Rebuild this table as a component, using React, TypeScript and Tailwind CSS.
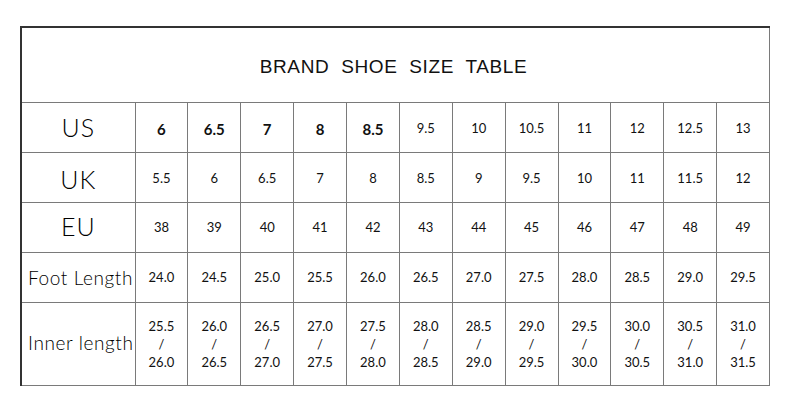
import React from 'react'

const US = ['6', '6.5', '7', '8', '8.5', '9.5', '10', '10.5', '11', '12', '12.5', '13']
const UK = ['5.5', '6', '6.5', '7', '8', '8.5', '9', '9.5', '10', '11', '11.5', '12']
const EU = ['38', '39', '40', '41', '42', '43', '44', '45', '46', '47', '48', '49']
const FOOT = ['24.0', '24.5', '25.0', '25.5', '26.0', '26.5', '27.0', '27.5', '28.0', '28.5', '29.0', '29.5']
const INNER = [
  ['25.5', '26.0'], ['26.0', '26.5'], ['26.5', '27.0'], ['27.0', '27.5'],
  ['27.5', '28.0'], ['28.0', '28.5'], ['28.5', '29.0'], ['29.0', '29.5'],
  ['29.5', '30.0'], ['30.0', '30.5'], ['30.5', '31.0'], ['31.0', '31.5'],
]

const cell = 'border border-[#7a7a7a] text-center align-middle p-0'
const label = 'border border-[#7a7a7a] text-center align-middle p-0 text-black font-light'

export default function App() {
  return (
    <div className="w-[790px] h-[412px] bg-white pt-[26px] pl-[20px] font-['Lato',sans-serif] text-[#111]">
      <table className="table-fixed border-collapse w-[750px] border-t-2 border-l-2 border-t-[#333] border-l-[#333]">
        <colgroup>
          <col className="w-[114px]" />
          {US.map((_, i) => (
            <col key={i} />
          ))}
        </colgroup>
        <tbody>
          <tr className="h-[75px]">
            <td
              colSpan={13}
              className="border border-[#7a7a7a] border-t-[#333] border-l-[#333] text-center align-middle font-['Liberation_Sans',sans-serif] text-[19px] tracking-[0.6px] [word-spacing:6px] pt-[4px] pr-[4px]"
            >
              BRAND SHOE SIZE TABLE
            </td>
          </tr>
          <tr className="h-[50px]">
            <td className={`${label} text-[25px] tracking-[1px] pt-[2px]`}>US</td>
            {US.map((v, i) => (
              <td
                key={i}
                className={`${cell} pt-[4px] ${i < 5 ? 'text-[15px] font-bold' : 'text-[13px]'}`}
              >
                {v}
              </td>
            ))}
          </tr>
          <tr className="h-[50px]">
            <td className={`${label} text-[25px] tracking-[1px] pt-[6px]`}>UK</td>
            {UK.map((v, i) => (
              <td key={i} className={`${cell} text-[13px] pt-[3px]`}>
                {v}
              </td>
            ))}
          </tr>
          <tr className="h-[50px]">
            <td className={`${label} text-[25px] tracking-[1px]`}>EU</td>
            {EU.map((v, i) => (
              <td key={i} className={`${cell} text-[13px] pt-[2px]`}>
                {v}
              </td>
            ))}
          </tr>
          <tr className="h-[50px]">
            <td className={`${label} text-[19px] tracking-[0.6px] text-left pl-[6px] whitespace-nowrap pt-[2px]`}>Foot Length</td>
            {FOOT.map((v, i) => (
              <td key={i} className={`${cell} text-[13px] pt-[2px]`}>
                {v}
              </td>
            ))}
          </tr>
          <tr className="h-[83px]">
            <td className={`${label} text-[19px] tracking-[0.6px] text-left pl-[6px] whitespace-nowrap`}>Inner length</td>
            {INNER.map(([a, b], i) => (
              <td key={i} className={`${cell} text-[13px] leading-[18px]`}>
                <div>{a}</div>
                <div>/</div>
                <div>{b}</div>
              </td>
            ))}
          </tr>
        </tbody>
      </table>
    </div>
  )
}
